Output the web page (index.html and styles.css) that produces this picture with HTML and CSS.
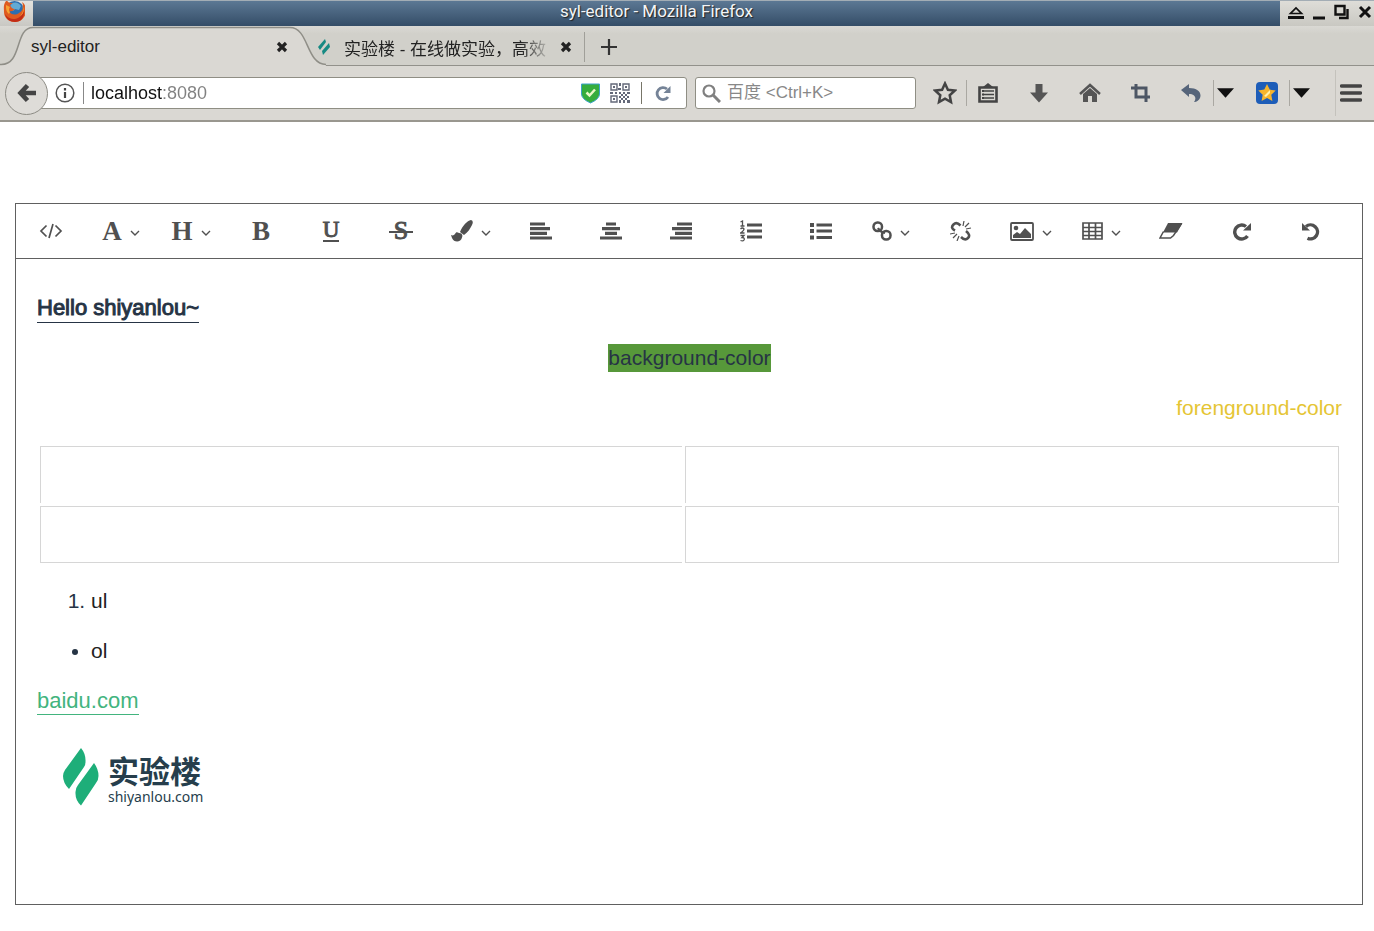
FILE: index.html
```html
<!DOCTYPE html>
<html lang="en">
<head>
<meta charset="utf-8">
<title>syl-editor</title>
<link rel="stylesheet" href="styles.css">
</head>
<body>
<svg class="defs" aria-hidden="true">
  <symbol id="chev" viewBox="0 0 10 6"><path d="M1 1l4 4 4-4" fill="none" stroke="currentColor" stroke-width="1.4"/></symbol>
  <symbol id="cross" viewBox="0 0 12 12"><path d="M2 2l8 8M10 2l-8 8" stroke="currentColor" stroke-width="3.2"/></symbol>
  <symbol id="caret" viewBox="0 0 18 10"><path d="M0 0h18l-9 10z" fill="currentColor"/></symbol>
  <symbol id="leaf" viewBox="0 0 36 58"><path d="M18 0Q23 6 22.500 14Q22.500 17 21 19L6 41Q0 35 0 28Q0 25 2 22zM31 15Q35.500 21 35.500 28Q35.500 32 33 35L18 57.500Q12 52 12.500 44Q12.500 40 15 37z" fill="currentColor"/></symbol>
</svg>
<header class="titlebar">
  <span class="app-icon">
    <svg width="25" height="24" viewBox="0 0 25 24"><circle cx="14.500" cy="10" r="10" fill="#2c6eb0"/><path d="M12 2q6-2 9 3l-2 4-4-1-2 2-4-3z" fill="#62aad4"/><path d="M6 0C3 4 4 8 4 11c0 6 5 10 11 10s11-5 11-11c0-4-1-7-4-9 2 4 1 9-3 11-4 3-9 1-10-2 3 1 5-1 6-2-3 0-4-2-5-4l3-2c-3 0-5 0-7-4z" fill="#df5b20"/><path d="M22 3c4 7 0 14-7 15-5 0-8-2-10-5 1 5 5 8 10 8 8 0 12-9 7-18z" fill="#c22d17"/><path d="M6 4c0 4 0 6 3 9l1-2c-2-2 0-5 0-5zM22 4c2 5 1 8-2 11 4-2 5-7 2-11z" fill="#f7a333"/></svg>
  </span>
  <h1 class="window-title">syl-editor - Mozilla Firefox</h1>
  <div class="window-buttons">
    <button type="button" aria-label="Shade"><svg width="16" height="15" viewBox="0 0 16 15"><path d="M2.500 8.500h11L8 3z" fill="none" stroke="#111" stroke-width="1.700"/><path d="M0 12.500h16" stroke="#111" stroke-width="3"/></svg></button>
    <button type="button" aria-label="Minimize"><svg width="14" height="15" viewBox="0 0 14 15"><path d="M1 13h12" stroke="#111" stroke-width="3"/></svg></button>
    <button type="button" aria-label="Maximize"><svg width="16" height="16" viewBox="0 0 16 16"><path d="M1.500 2h9v8.500h-9zM13.500 5v9H5" fill="none" stroke="#111" stroke-width="2.400"/></svg></button>
    <button type="button" aria-label="Close"><svg width="14" height="14" viewBox="0 0 14 14"><path d="M2 2l10 10M12 2L2 12" stroke="#111" stroke-width="3"/></svg></button>
  </div>
</header>

<div class="tabs">
  <div class="tab active">
    <svg class="tab-shape" width="326" height="40" viewBox="0 0 326 40"><path d="M0 38.500C23 40 14 1.500 33 1.500H290c19 0 16 37 36 37V40H0z" fill="#dad8d3"/><path d="M0 38.500C23 40 14 1.500 33 1.500H290c19 0 16 37 36 37" fill="none" stroke="#8f8e87" stroke-width="1.500"/></svg>
    <span class="tab-label">syl-editor</span>
    <button type="button" aria-label="Close tab"><svg width="12" height="12"><use href="#cross"/></svg></button>
  </div>
  <div class="tab second">
    <svg class="favicon" width="12" height="16" viewBox="0 0 12 16"><path d="M7 0l1 3-6 8-2-3zM11 4l1 4-7 8-1-4z" fill="currentColor"/></svg>
    <span class="tab-label fade">实验楼 - 在线做实验，高效</span>
    <button type="button" aria-label="Close tab"><svg width="12" height="12"><use href="#cross"/></svg></button>
  </div>
  <button type="button" class="new-tab" aria-label="New tab"><svg width="18" height="18" viewBox="0 0 18 18"><path d="M9 1v16M1 9h16" stroke="#333" stroke-width="2.200"/></svg></button>
</div>

<nav class="navbar">
  <button type="button" class="back" aria-label="Back"><svg width="20" height="20" viewBox="0 0 20 20"><path d="M10.500 2.500L3.500 10l7 7.500M4 10h15" fill="none" stroke="#444" stroke-width="4.600"/></svg></button>
  <div class="url">
    <svg width="20" height="20" viewBox="0 0 20 20"><circle cx="10" cy="10" r="8.800" fill="none" stroke="#555" stroke-width="1.500"/><path d="M10 9v6M10 5v2.400" stroke="#444" stroke-width="2.200"/></svg>
    <input class="address" type="text" value="localhost:8080" aria-label="Address">
    <svg width="19" height="21" viewBox="0 0 19 21"><path d="M.5 1h18v10q0 5-9 9-9-4-9-9z" fill="#35ad3d" stroke="#3ca2c9"/><path d="M5.500 9.500l3 3 5.500-6" fill="none" stroke="#e9f8c9" stroke-width="2.500"/></svg>
    <svg class="qr" width="20" height="20" viewBox="0 0 20 20"><path d="M1 1h6v6H1zM13 1h6v6h-6zM1 13h6v6H1z" fill="none" stroke="#646979" stroke-width="1.400"/><path d="M3 3h2v2H3zM15 3h2v2h-2zM3 15h2v2H3zM9 0h2v3H9zM8 5h3v2H8zM0 9h3v2H0zM5 9h2v2H5zM9 9h2v2H9zM13 9h2v2h-2zM17 9h3v2h-3zM11 11h2v2h-2zM15 11h2v2h-2zM9 13h2v2H9zM13 13h2v2h-2zM17 13h2v2h-2zM11 15h2v2h-2zM15 15h2v2h-2zM9 17h2v3H9zM13 17h2v3h-2zM17 17h3v3h-3z" fill="#646979"/></svg>
    <span class="url-sep"></span>
    <button type="button" aria-label="Reload"><svg width="17" height="17" viewBox="0 0 17 17"><path d="M12 4A6 6 0 1 0 13 12" fill="none" stroke="#758397" stroke-width="2.800"/><path d="M15.500 1v7H8.500z" fill="#758397"/></svg></button>
  </div>
  <div class="search">
    <svg width="19" height="19" viewBox="0 0 19 19"><circle cx="7" cy="7" r="5.500" fill="none" stroke="#808080" stroke-width="2.200"/><path d="M11 11l7 7" stroke="#808080" stroke-width="3"/></svg>
    <input type="search" placeholder="百度 &lt;Ctrl+K&gt;" aria-label="Search">
  </div>
  <div class="tools">
    <button type="button" class="w42" aria-label="Bookmark"><svg width="24" height="24" viewBox="0 0 24 24"><path d="M12 2.500l2.900 6.300 6.800.8-5 4.700 1.300 6.700-6-3.300L6 21l1.300-6.700-5-4.700 6.800-.8z" fill="none" stroke="#444" stroke-width="2.500"/></svg></button>
    <i class="sep"></i>
    <button type="button" class="w41" aria-label="Bookmarks list"><svg width="20" height="20" viewBox="0 0 20 20"><path d="M1.500 4.500h17v14h-17z" fill="none" stroke="#444" stroke-width="2.600"/><path d="M5 4l5-4 5 4zM4 7h2v2H4zM4 10.500h2v2H4zM4 14h2v2H4z" fill="#444"/><path d="M5 8h11M5 11.500h11M5 15h11" stroke="#444" stroke-width="1.500"/></svg></button>
    <button type="button" class="w51 after" aria-label="Downloads"><svg width="20" height="20" viewBox="0 0 20 20"><path d="M6.500 1h7v8.500H19L10 19.500 1 9.500h5.500z" fill="#555"/></svg></button>
    <button type="button" class="w51" aria-label="Home"><svg width="22" height="20" viewBox="0 0 22 20"><path d="M1 11L11 2l10 9" fill="none" stroke="#555" stroke-width="2.500"/><path d="M4 11l7-6 7 6v8h-5v-6H9v6H4z" fill="#555"/></svg></button>
    <button type="button" class="w51" aria-label="Screenshot"><svg width="20" height="20" viewBox="0 0 20 20"><path d="M5 1v13h14M0 5h15v14" fill="none" stroke="#4d5664" stroke-width="3"/></svg></button>
    <button type="button" class="w44" aria-label="Undo close"><svg width="20" height="20" viewBox="0 0 20 20"><path d="M0 7l8-6v4c9 0 13 5 11 10-1 2-3 4-6 4 3-4 1-8-5-8v3z" fill="#56657a"/></svg></button>
    <i class="sep"></i>
    <button type="button" class="w23" aria-label="Undo menu"><svg width="17" height="10"><use href="#caret"/></svg></button>
    <button type="button" class="w44 fav" aria-label="Favourites"><svg width="22" height="22" viewBox="0 0 22 22"><rect width="22" height="22" rx="4" fill="#1d5db8"/><path d="M11 2l2.700 5.600 6 .8-4.400 4.300 1.100 6.300-5.400-3-5.400 3 1.100-6.300L2.300 8.400l6-.8z" fill="#f6b42c"/><path d="M8 14l6-6v3l-4 4z" fill="#fff0a8"/></svg></button>
    <i class="sep"></i>
    <button type="button" class="w23" aria-label="Favourites menu"><svg width="17" height="10"><use href="#caret"/></svg></button>
    <i class="sep tall"></i>
    <button type="button" class="w29" aria-label="Menu"><svg width="22" height="18" viewBox="0 0 22 18"><path d="M1.500 2h19M1.500 9h19M1.500 16h19" stroke="#444" stroke-width="3.400" stroke-linecap="round"/></svg></button>
  </div>
</nav>

<main class="editor">
  <div class="toolbar" role="toolbar" aria-label="Formatting">
    <button type="button" aria-label="Code"><svg width="24" height="18" viewBox="0 0 24 18"><path d="M7.500 3.500L2 9l5.500 5.500M16.500 3.500L22 9l-5.500 5.500M14 2l-4 14" fill="none" stroke="currentColor" stroke-width="1.700"/></svg></button>
    <button type="button"><b>A</b><svg class="chev" width="10" height="6"><use href="#chev"/></svg></button>
    <button type="button"><b>H</b><svg class="chev" width="10" height="6"><use href="#chev"/></svg></button>
    <button type="button"><b>B</b></button>
    <button type="button"><span class="under">U</span></button>
    <button type="button"><span class="strike">S</span></button>
    <button type="button" aria-label="Brush"><svg width="22" height="22" viewBox="0 0 22 22"><path d="M9 12C12 5 16 1 20 0q3 1 1 5c-2 4-4 7-8 10zM8 13c3 0 4 2 3 4.500-1 5-8 5.500-10 .5l-1-3c2 1 3 0 4-1 1-2 2-2 4-1z" fill="currentColor"/></svg><svg class="chev" width="10" height="6"><use href="#chev"/></svg></button>
    <button type="button" aria-label="Align left"><svg width="22" height="18" viewBox="0 0 22 18"><path d="M0 2h15M0 6.700h20M0 11.300h17M0 16h22" stroke="currentColor" stroke-width="3.200"/></svg></button>
    <button type="button" aria-label="Align center"><svg width="22" height="18" viewBox="0 0 22 18"><path d="M6 2h10M2 6.700h18M5 11.300h12M0 16h22" stroke="currentColor" stroke-width="3.200"/></svg></button>
    <button type="button" aria-label="Align right"><svg width="22" height="18" viewBox="0 0 22 18"><path d="M7 2h15M2 6.700h20M5 11.300h17M0 16h22" stroke="currentColor" stroke-width="3.200"/></svg></button>
    <button type="button" aria-label="Numbered list"><svg width="22" height="22" viewBox="0 0 22 22"><path d="M7 5h15M7 11h15M7 17h15" stroke="currentColor" stroke-width="3"/><path d="M.5 2L2.500 1v5M.5 6h4M.5 9q2-2 3.500 0 0 1.500-3.500 4h4M.5 15.500h3.500l-2 2q3 0 2 2.500-1 1.500-3.500.5" fill="none" stroke="currentColor" stroke-width="1.300"/></svg></button>
    <button type="button" aria-label="Bulleted list"><svg width="22" height="18" viewBox="0 0 22 18"><path d="M6.500 3H22M6.500 9H22M6.500 15.500H22" stroke="currentColor" stroke-width="3"/><path d="M0 3h4M0 9h4M0 15.500h4" stroke="currentColor" stroke-width="4"/></svg></button>
    <button type="button" aria-label="Link"><svg width="20" height="20" viewBox="0 0 20 20"><rect x="1.500" y="1.500" width="8.500" height="8.500" rx="4" fill="none" stroke="currentColor" stroke-width="2.500"/><rect x="10" y="10" width="8.500" height="8.500" rx="4" fill="none" stroke="currentColor" stroke-width="2.500"/><path d="M6 7q2 4 7 5" fill="none" stroke="currentColor" stroke-width="2.200"/></svg><svg class="chev" width="10" height="6"><use href="#chev"/></svg></button>
    <button type="button" aria-label="Unlink"><svg width="22" height="20" viewBox="0 0 22 20"><path d="M5 9.500Q0 7 3.500 3.500q3-3 7 1M11 16q4 4 7 1t-2-7" fill="none" stroke="currentColor" stroke-width="2.600"/><path d="M13 5l1-5M15 6l4-4M16 8l5-1M5 12l-5 1M7 13l-4 4M9 15l-2 5" stroke="currentColor" stroke-width="1.200"/></svg></button>
    <button type="button" aria-label="Image"><svg width="24" height="19" viewBox="0 0 24 19"><rect x="1" y="1" width="22" height="17" rx="1" fill="none" stroke="currentColor" stroke-width="1.800"/><circle cx="6" cy="6" r="2.300" fill="currentColor"/><path d="M3 16v-3l4-3 3 2 5-6 6 6v4z" fill="currentColor"/></svg><svg class="chev" width="10" height="6"><use href="#chev"/></svg></button>
    <button type="button" aria-label="Table"><svg width="21" height="18" viewBox="0 0 21 18"><path d="M1 1h19v16H1zM1 5.500h19M1 9.500h19M1 13.500h19M7 1v16M13.500 1v16" fill="none" stroke="currentColor" stroke-width="1.700"/></svg><svg class="chev" width="10" height="6"><use href="#chev"/></svg></button>
    <button type="button" aria-label="Clear format"><svg width="24" height="18" viewBox="0 0 24 18"><path d="M9 1h14.500l-5.500 9.500H4z" fill="currentColor"/><path d="M4.500 9.500L1 16h10.500l3-2.500 8-12" fill="none" stroke="currentColor" stroke-width="1.500"/></svg></button>
    <button type="button" aria-label="Redo"><svg width="19" height="19" viewBox="0 0 19 19"><path d="M14 4.500A7 7 0 1 0 15.500 14" fill="none" stroke="currentColor" stroke-width="3.400"/><path d="M19 1v7.500h-8z" fill="currentColor"/></svg></button>
    <button type="button" aria-label="Undo"><svg width="19" height="19" viewBox="0 0 19 19"><path d="M4 4.500A7 7 0 1 1 5.500 16.200" fill="none" stroke="currentColor" stroke-width="3.400"/><path d="M0 1v7.500h8z" fill="currentColor"/></svg></button>
  </div>
  <article class="content">
    <p><strong class="hello">Hello shiyanlou~</strong></p>
    <p class="center"><span class="marked">background-color</span></p>
    <p class="right"><span class="gold">forenground-color</span></p>
    <table aria-label="Empty table">
      <tr><td></td><td></td></tr>
      <tr><td></td><td></td></tr>
    </table>
    <ol><li>ul</li></ol>
    <ul><li>ol</li></ul>
    <p><a href="#">baidu.com</a></p>
    <div class="logo">
      <svg width="36" height="58"><use href="#leaf"/></svg>
      <div class="logo-text"><span class="logo-cn">实验楼</span><span class="logo-en">shiyanlou.com</span></div>
    </div>
  </article>
</main>
</body>
</html>
```
FILE: styles.css
```css
* { box-sizing: border-box; }
body {
  margin: 0;
  min-height: 100vh;
  display: flex;
  flex-direction: column;
  background: #fff;
  color: #222;
  font-family: "Liberation Sans", "Noto Sans CJK SC", sans-serif;
}
button {
  display: flex;
  align-items: center;
  justify-content: center;
  padding: 0;
  border: 0;
  background: none;
  color: inherit;
  font: inherit;
}
input { min-width: 0; padding: 0; border: 0; outline: 0; background: none; }
svg { display: block; flex: none; }
.defs { position: absolute; width: 0; height: 0; }

.titlebar {
  display: flex;
  height: 26px;
  border-top: 1px solid #a3adb5;
  background: linear-gradient(#5c7894, #344d67);
}
.app-icon { width: 33px; background: linear-gradient(#e4e3df, #c9c8c3); }
.window-title {
  flex: 1;
  margin: 0;
  color: #f3f5f7;
  font: 17px/21px Roboto, sans-serif;
  text-align: center;
  text-shadow: 1px 1px 1px #222;
}
.window-buttons {
  display: flex;
  align-items: center;
  justify-content: space-between;
  width: 94px;
  padding: 0 2px 3px 8px;
  background: linear-gradient(#deddd8, #c9c8c2);
}

.tabs {
  display: flex;
  height: 40px;
  border-bottom: 1px solid #92918b;
  background: linear-gradient(#dad9d4, #d1d0ca 20%);
  font-size: 17px;
}
.tab { position: relative; display: flex; align-items: center; padding-top: 3px; }
.tab.active { width: 305px; padding-left: 31px; padding-right: 17px; }
.tab.active button { margin-left: auto; }
.tab.active > * { z-index: 1; }
.tab .tab-shape { position: absolute; left: 0; top: 0; z-index: 0; }
.tab.second { width: 280px; padding-left: 13px; padding-right: 13px; }
.tab.second::after {
  content: "";
  position: absolute;
  right: 0;
  top: 6px;
  height: 30px;
  border-right: 1px solid #a09f99;
}
.favicon { color: #168a83; margin-right: 14px; }
.tab-label { position: relative; white-space: nowrap; }
.fade {
  flex: 1;
  overflow: hidden;
  margin-right: 8px;
  -webkit-mask-image: linear-gradient(90deg, #000 85%, transparent);
  mask-image: linear-gradient(90deg, #000 85%, transparent);
}
.new-tab { width: 48px; padding-top: 3px; }

.navbar {
  display: flex;
  align-items: center;
  height: 56px;
  padding: 0 9px 0 5px;
  border-bottom: 2px solid #99978f;
  background: #dad8d3;
}
.back {
  z-index: 1;
  width: 43px;
  height: 43px;
  margin-right: -10px;
  border: 1px solid #8c8b84;
  border-radius: 50%;
  background: #dedcd8;
}
.url, .search {
  display: flex;
  align-items: center;
  height: 32px;
  border: 1px solid #8f8e84;
  border-radius: 3px;
  background: #fff;
}
.url { flex: 1; padding: 0 14px 0 16px; }
.address {
  flex: 1;
  height: 22px;
  margin: 0 8px;
  padding-left: 7px;
  border-left: 1px solid #888;
  background: linear-gradient(90deg, #111 78px, #808080 78px);
  -webkit-background-clip: text;
  background-clip: text;
  color: transparent;
  font: 18px/22px "Liberation Sans", sans-serif;
}
.qr { margin: 0 11px 0 10px; }
.url-sep { width: 1px; height: 22px; margin-right: 13px; background: #777568; }
.search { width: 221px; margin: 0 8px; padding: 0 6px; gap: 6px; }
.search input { flex: 1; font: 17px/24px "Liberation Sans", "Noto Sans CJK SC", sans-serif; }
.search input::placeholder { color: #888; opacity: 1; }
.tools { display: flex; align-items: center; color: #111; }
.sep { width: 1px; height: 26px; background: #aaa8a2; }
.sep.tall { height: 46px; margin-left: 22px; background: #c4c2bc; }
.w42 { width: 42px; }
.w41 { width: 41px; }
.w51 { width: 51px; }
.w44 { width: 44px; }
.w23 { width: 23px; }
.w29 { width: 29px; }
.after { margin-left: 5px; }
.w51 + .w44 { margin-left: 3px; }
.fav { margin-left: 8px; }

.editor {
  flex: 1;
  margin: 81px 11px 26px 15px;
  border: 1px solid #606060;
}
.toolbar {
  display: flex;
  height: 55px;
  padding-right: 16px;
  border-bottom: 1px solid #606060;
  color: #505050;
  font: 27px/30px "Liberation Serif", serif;
}
.toolbar button { flex: 1; gap: 8px; }
.chev { margin-top: 4px; }
.under { border-bottom: 2px solid; font-size: 23px; line-height: 20px; -webkit-text-stroke: 1px #505050; }
.strike { position: relative; padding: 0 5px; -webkit-text-stroke: 1px #505050; font-size: 26px; }
.strike::after {
  content: "";
  position: absolute;
  left: 0;
  right: 0;
  top: 50%;
  border-top: 2px solid;
}

.content {
  padding: 34px 20px 20px 21px;
  color: #263445;
  font-size: 21px;
  line-height: 30px;
}
p, ol, ul { margin: 0 0 20px; }
.center { text-align: center; }
.right { text-align: right; }
.hello {
  display: inline-block;
  border-bottom: 1px solid #263445;
  font-size: 22px;
  font-weight: normal;
  line-height: 28px;
  -webkit-text-stroke: 1px #263445;
}
.marked { display: inline-block; background: #57983a; line-height: 28px; }
.gold { color: #e5c534; }
table {
  width: 100%;
  margin-bottom: 20px;
  border-collapse: separate;
  border-spacing: 3px;
  table-layout: fixed;
}
td { height: 57px; padding: 0; border: 1px solid #d6d6d6; }
td:first-child { width: 643px; width: 49.5%; border-right: 0; }
tr:first-child td { border-bottom: 0; }
ol, ul { padding-left: 54px; }
li { color: #222; }
li::marker { color: #263445; }
a {
  display: inline-block;
  border-bottom: 1px solid #42b47e;
  color: #42b47e;
  font-size: 22px;
  line-height: 27px;
  text-decoration: none;
}
.logo {
  display: flex;
  align-items: flex-end;
  gap: 9px;
  padding: 12px 0 0 26px;
  color: #1eae79;
}
.logo-text { display: flex; flex-direction: column; color: #263e4c; }
.logo-cn { font: bold 31px/36px "Noto Sans CJK SC", sans-serif; }
.logo-en { font: 14px/18px "Noto Sans", sans-serif; }
```
